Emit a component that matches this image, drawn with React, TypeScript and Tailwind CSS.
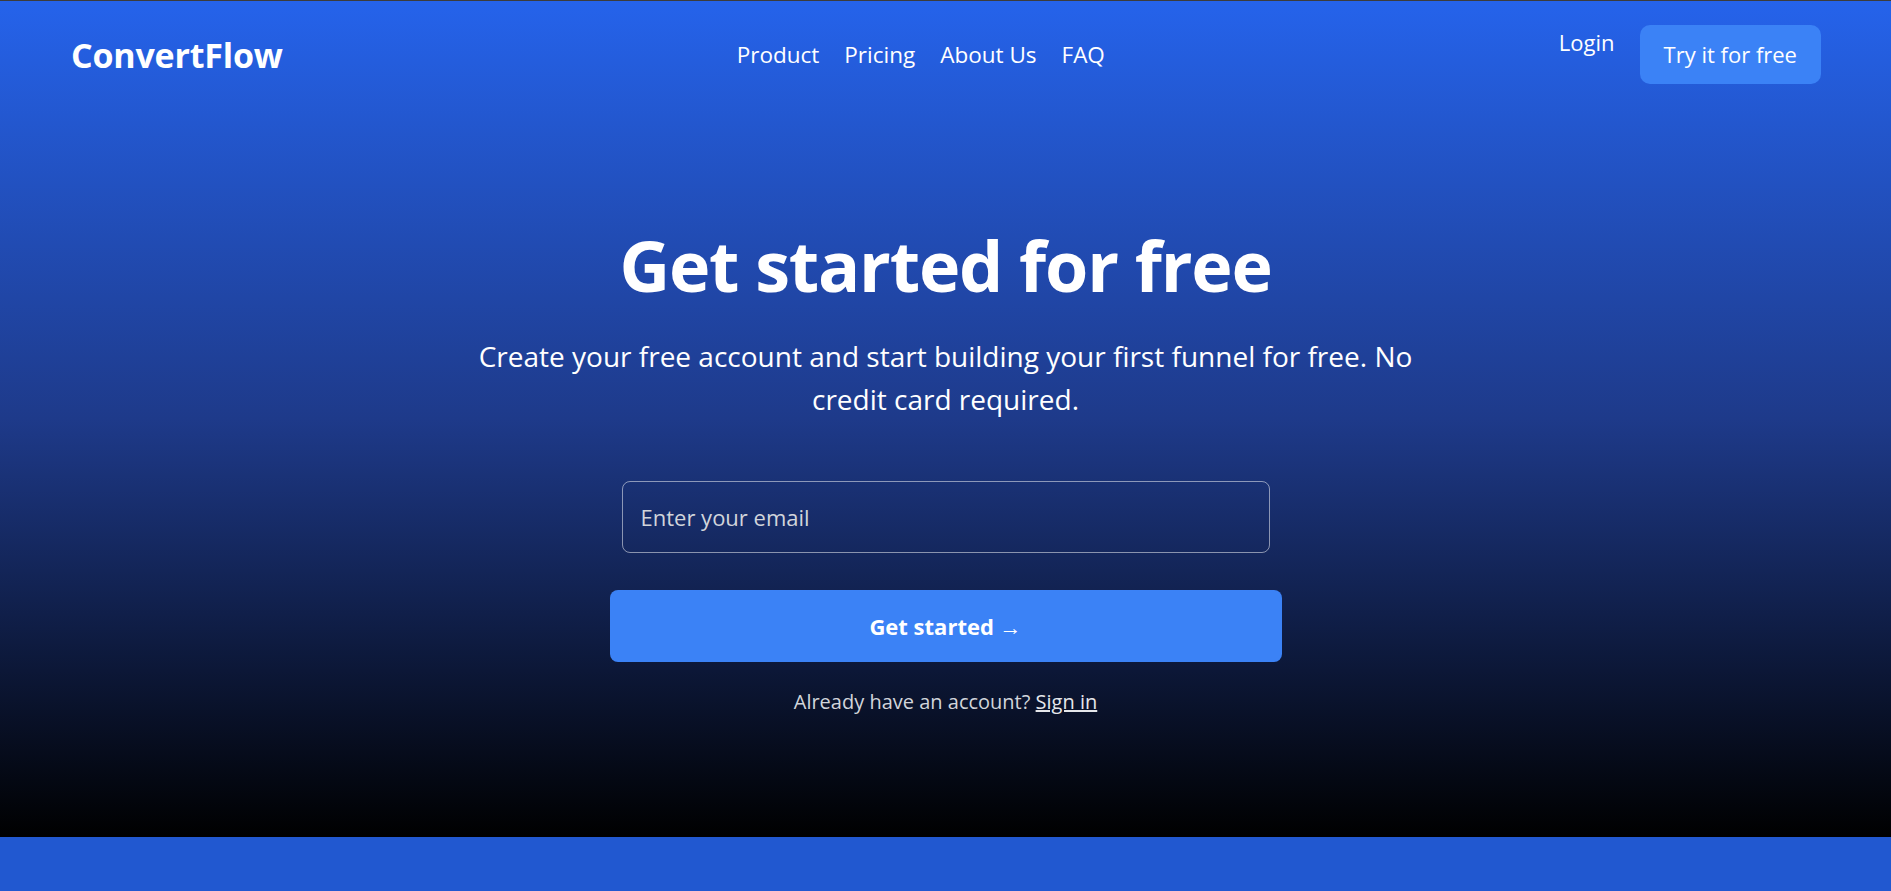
import React from "react";

const navLinks = ["Product", "Pricing", "About Us", "FAQ"];

export default function App() {
  return (
    <div className="w-full min-h-screen bg-[#2158d0] font-['Open_Sans',_'Noto_Sans',_sans-serif]">
      <div className="h-[837px] w-full border-t border-[#3c3c3c] bg-[linear-gradient(to_bottom,#2563eb,#1e3a8a,#000000)] text-white">
        {/* top bar */}
        <header className="flex items-center justify-between pl-[71px] pr-[70px] pt-[24px]">
          <a href="#" className="text-[34px] font-bold leading-none tracking-[-0.2px]">
            ConvertFlow
          </a>
          <nav className="flex items-center gap-[25px] text-[22.5px] leading-[35px]">
            {navLinks.map((link) => (
              <a key={link} href="#">
                {link}
              </a>
            ))}
          </nav>
          <div className="flex items-start gap-[25px]">
            <a href="#" className="text-[22px] leading-[35px]">
              Login
            </a>
            <button className="h-[59px] rounded-[10px] bg-[#3b82f6] px-[24px] text-[22px] leading-[35px] text-white">
              Try it for free
            </button>
          </div>
        </header>

        <main className="flex flex-col items-center pt-[146px] text-center">
          <h1 className="text-[70px] font-bold leading-[70px] tracking-[-1.2px]">
            Get started for free
          </h1>
          <p className="mt-[35px] max-w-[960px] text-[28px] leading-[43px]">
            Create your free account and start building your first funnel for free. No credit card
            required.
          </p>

          <form className="mt-[60px] flex w-[672px] flex-col items-center" onSubmit={(e) => e.preventDefault()}>
            <input
              type="email"
              placeholder="Enter your email"
              className="h-[72px] w-[648px] rounded-[8px] border border-white/50 bg-transparent px-[18px] text-[22px] text-white outline-none placeholder:text-[#d1d5db]"
            />
            <button
              type="submit"
              className="mt-[37px] h-[72px] w-[672px] rounded-[8px] bg-[#3b82f6] text-[22px] font-bold text-white"
            >
              Get started →
            </button>
          </form>

          <p className="mt-[26px] text-[20px] leading-[28px] text-[#d1d5db]">
            Already have an account?{" "}
            <a href="#" className="text-[#e5e7eb] underline">
              Sign in
            </a>
          </p>
        </main>
      </div>
      <div className="h-[120px] w-full bg-[#2158d0]" />
    </div>
  );
}
